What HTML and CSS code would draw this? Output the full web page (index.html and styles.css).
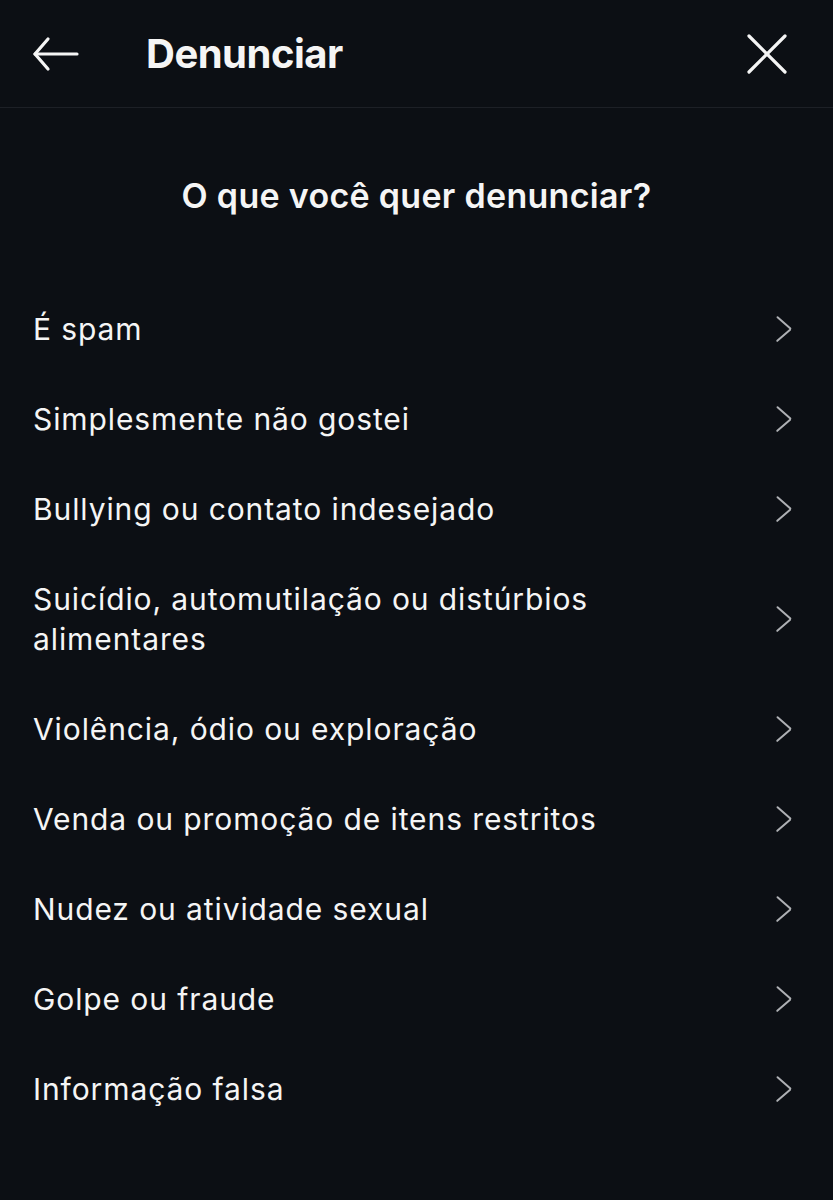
FILE: index.html
```html
<!DOCTYPE html>
<html lang="pt-BR">
<head>
    <meta charset="UTF-8">
    <title>Denunciar</title>
    <meta name="viewport" content="width=device-width, initial-scale=1.0">
    <link rel="stylesheet" href="styles.css">
</head>
<body>
    <div class="report-sheet">
        <header class="sheet-header">
            <button class="icon-btn back-btn" aria-label="Voltar">
                <svg width="48" height="36" viewBox="0 0 48 36" fill="none" stroke="currentColor" stroke-width="3.2" stroke-linecap="round" stroke-linejoin="round">
                    <path d="M45 18H3"/>
                    <path d="M16 3L3 18l13 15"/>
                </svg>
            </button>
            <div class="sheet-title">Denunciar</div>
            <button class="icon-btn close-btn" aria-label="Fechar">
                <svg width="40" height="40" viewBox="0 0 40 40" fill="none" stroke="currentColor" stroke-width="3.2" stroke-linecap="round">
                    <path d="M2 2l36 36"/>
                    <path d="M38 2L2 38"/>
                </svg>
            </button>
        </header>

        <div class="question">O que você quer denunciar?</div>

        <ul class="reason-list">
            <li class="reason"><span class="reason-text">É spam</span><span class="chevron"></span></li>
            <li class="reason"><span class="reason-text">Simplesmente não gostei</span><span class="chevron"></span></li>
            <li class="reason"><span class="reason-text">Bullying ou contato indesejado</span><span class="chevron"></span></li>
            <li class="reason"><span class="reason-text">Suicídio, automutilação ou distúrbios alimentares</span><span class="chevron"></span></li>
            <li class="reason"><span class="reason-text">Violência, ódio ou exploração</span><span class="chevron"></span></li>
            <li class="reason"><span class="reason-text">Venda ou promoção de itens restritos</span><span class="chevron"></span></li>
            <li class="reason"><span class="reason-text">Nudez ou atividade sexual</span><span class="chevron"></span></li>
            <li class="reason"><span class="reason-text">Golpe ou fraude</span><span class="chevron"></span></li>
            <li class="reason"><span class="reason-text">Informação falsa</span><span class="chevron"></span></li>
        </ul>
    </div>
</body>
</html>
```

FILE: styles.css
```css
:root {
    --bg: #0c0f14;
    --divider: #1d2026;
    --text: #f5f5f5;
    --chevron: #aeb0b4;
}

body {
    margin: 0;
    background: var(--bg);
    color: var(--text);
    font-family: Inter, Roboto, "Liberation Sans", sans-serif;
    min-height: 100vh;
}

.report-sheet {
    display: flex;
    flex-direction: column;
}

.sheet-header {
    height: 108px;
    display: flex;
    align-items: center;
    padding: 0 46px 0 32px;
    border-bottom: 1px solid var(--divider);
    box-sizing: border-box;
}

.icon-btn {
    background: none;
    border: none;
    padding: 0;
    color: var(--text);
    display: flex;
    cursor: pointer;
}

.sheet-title {
    flex: 1;
    margin-left: 66px;
    font-size: 40px;
    font-weight: 700;
    letter-spacing: -0.5px;
}

.question {
    text-align: center;
    font-size: 34px;
    font-weight: 600;
    padding: 68px 0 68px 0;
    line-height: 40px;
    letter-spacing: 0.3px;
}

.reason-list {
    list-style: none;
    margin: 0;
    padding: 0;
}

.reason {
    display: flex;
    align-items: center;
    gap: 40px;
    padding: 25px 43px 25px 33px;
}

.reason-text {
    flex: 1;
    font-size: 30px;
    line-height: 40px;
    letter-spacing: 0.9px;
    padding-right: 120px;
}

/* tall chevron made of two rotated bars */
.chevron {
    width: 18px;
    height: 30px;
    position: relative;
}
.chevron::before,
.chevron::after {
    content: "";
    position: absolute;
    left: 0;
    top: 13.7px;
    width: 19px;
    height: 2.4px;
    border-radius: 2px;
    background: var(--chevron);
    transform-origin: right center;
}
.chevron::before {
    transform: rotate(41deg);
}
.chevron::after {
    transform: rotate(-41deg);
}
```
